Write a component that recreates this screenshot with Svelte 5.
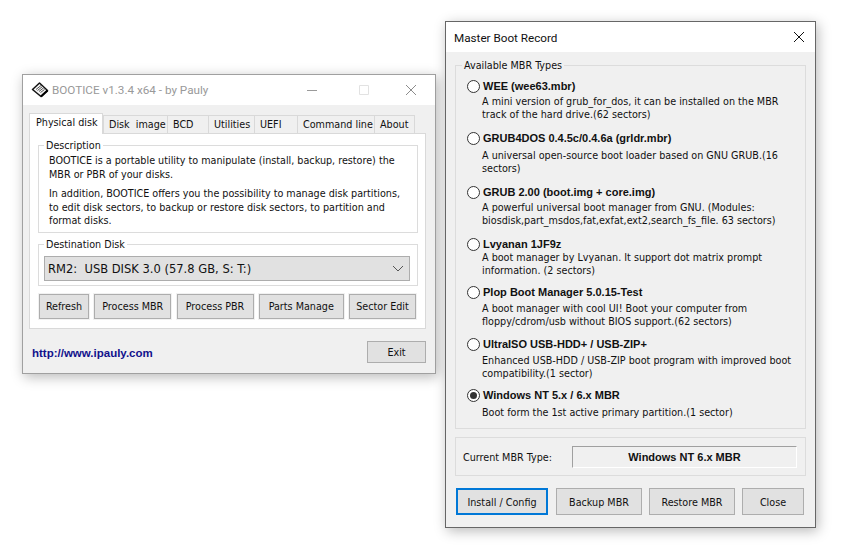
<script>
  const tabs = [
    { label: 'Physical disk', w: 74, active: true },
    { label: 'Disk  image', w: 65 },
    { label: 'BCD', w: 42 },
    { label: 'Utilities', w: 47 },
    { label: 'UEFI', w: 44 },
    { label: 'Command line', w: 78 },
    { label: 'About', w: 41 }
  ];
  const actions = [
    { label: 'Refresh', w: 50 },
    { label: 'Process MBR', w: 77 },
    { label: 'Process PBR', w: 77 },
    { label: 'Parts Manage', w: 85 },
    { label: 'Sector Edit', w: 67 }
  ];
  const types = [
    { t: 'WEE (wee63.mbr)', top: 7, gap: 1, lines: ['A mini version of grub_for_dos, it can be installed on the MBR', 'track of the hard drive.(62 sectors)'] },
    { t: 'GRUB4DOS 0.4.5c/0.4.6a (grldr.mbr)', top: 10, gap: 3, lines: ['A universal open-source boot loader based on GNU GRUB.(16', 'sectors)'] },
    { t: 'GRUB 2.00 (boot.img + core.img)', top: 10, gap: 1, lines: ['A powerful universal boot manager from GNU. (Modules:', 'biosdisk,part_msdos,fat,exfat,ext2,search_fs_file. 63 sectors)'] },
    { t: 'Lvyanan 1JF9z', top: 10, gap: -1, lines: ['A boot manager by Lvyanan. It support dot matrix prompt', 'information. (2 sectors)'] },
    { t: 'Plop Boot Manager 5.0.15-Test', top: 8, gap: 2, lines: ['A boot manager with cool UI! Boot your computer from', 'floppy/cdrom/usb without BIOS support.(62 sectors)'] },
    { t: 'UltraISO USB-HDD+ / USB-ZIP+', top: 9, gap: 2, lines: ['Enhanced USB-HDD / USB-ZIP boot program with improved boot', 'compatibility.(1 sector)'] },
    { t: 'Windows NT 5.x / 6.x MBR', top: 8, gap: 3, lines: ['Boot form the 1st active primary partition.(1 sector)'], checked: true }
  ];
</script>

<div class="desk">
  <section class="win main">
    <header class="bar">
      <svg class="logo" width="18" height="16" viewBox="0 0 18 16">
        <path d="M8.500 1 16.500 8.500 10 14.500 1.500 7.500Z" fill="#f4f4f4" stroke="#111" stroke-width="1.500" stroke-linejoin="round" />
        <path d="M5 7.500 10 3.500M6.500 8.500 11.500 4.500M8 9.500 13 5.500M9.500 10.500 13.500 7.500" stroke="#555" stroke-width="1" />
        <path d="M16.500 8.500 10 14.500" stroke="#000" stroke-width="2.200" />
      </svg>
      <span class="title">BOOTICE v1.3.4 x64 - by Pauly</span>
      <div class="caps">
        <svg width="140" height="14" viewBox="0 0 140 14">
          <path d="M12 7.500H22" stroke="#9a9a9a" />
          <path d="M64.500 2.500h9v9h-9z" fill="none" stroke="#e2e2e2" />
          <path d="M111 2 121 12M121 2 111 12" stroke="#8c8c8c" />
        </svg>
      </div>
    </header>
    <div class="body">
      <div class="tabs">
        {#each tabs as tab}
          <div class="tab" class:active={tab.active} style="width:{tab.w}px">{tab.label}</div>
        {/each}
      </div>
      <div class="panel">
        <fieldset class="group desc">
          <legend>Description</legend>
          <p>BOOTICE is a portable utility to manipulate (install, backup, restore) the<br />MBR or PBR of your disks.</p>
          <p>In addition, BOOTICE offers you the possibility to manage disk partitions,<br />to edit disk sectors, to backup or restore disk sectors, to partition and<br />format disks.</p>
        </fieldset>
        <fieldset class="group dest">
          <legend>Destination Disk</legend>
          <div class="combo">
            <span>RM2:  USB DISK 3.0 (57.8 GB, S: T:)</span>
            <svg width="12" height="7" viewBox="0 0 12 7"><path d="M1 1 6 6 11 1" fill="none" stroke="#555" /></svg>
          </div>
        </fieldset>
        <div class="actions">
          {#each actions as a}
            <button style="width:{a.w}px">{a.label}</button>
          {/each}
        </div>
      </div>
      <div class="foot">
        <span class="link">http://www.ipauly.com</span>
        <button class="exit">Exit</button>
      </div>
    </div>
  </section>

  <section class="win mbr">
    <header class="bar bar2">
      <span class="title2">Master Boot Record</span>
      <svg width="12" height="12" viewBox="0 0 12 12"><path d="M1 1 11 11M11 1 1 11" stroke="#111" /></svg>
    </header>
    <div class="body2">
      <fieldset class="group types">
        <legend>Available MBR Types</legend>
        {#each types as item}
          <div class="type" style="margin-top:{item.top}px">
            <div class="head" style="margin-bottom:{item.gap}px">
              <span class="radio" class:on={item.checked}></span>
              <b>{item.t}</b>
            </div>
            {#each item.lines as line}
              <div class="line">{line}</div>
            {/each}
          </div>
        {/each}
      </fieldset>
      <fieldset class="group current">
        <span class="cur-label">Current MBR Type:</span>
        <div class="field">Windows NT 6.x MBR</div>
      </fieldset>
      <div class="actions2">
        <button class="primary">Install / Config</button>
        <button class="b86">Backup MBR</button>
        <button class="b86">Restore MBR</button>
        <button class="b62">Close</button>
      </div>
    </div>
  </section>
</div>

<style>
  :global(body) {
    margin: 0;
    background: #fff;
  }
  .desk {
    position: relative;
    width: 856px;
    height: 553px;
    overflow: hidden;
    font: 10.700px/13px "DejaVu Sans Condensed", "DejaVu Sans", sans-serif;
    color: #111;
  }
  .win {
    position: absolute;
    box-sizing: border-box;
    background: #f0f0f0;
    border: 1px solid #8a8a8a;
    box-shadow: 2px 3px 12px rgba(0, 0, 0, 0.28);
    display: flex;
    flex-direction: column;
  }
  .main {
    left: 22px;
    top: 74px;
    width: 414px;
    height: 300px;
    border-color: #a0a0a0;
  }
  .mbr {
    left: 445px;
    top: 21px;
    width: 371px;
    height: 507px;
    border-color: #666;
  }
  .bar {
    height: 30px;
    background: #fff;
    display: flex;
    align-items: center;
    flex: none;
  }
  .logo {
    margin-left: 8px;
    margin-right: 3px;
    flex: none;
  }
  .title {
    color: #999;
    font: 11.700px/28px Roboto, sans-serif;
  }
  .caps {
    margin-left: auto;
    margin-right: 0;
    display: flex;
  }
  .body {
    flex: 1;
    padding: 8px 9px 0 6px;
  }
  .tabs {
    display: flex;
    padding-left: 1px;
    height: 20px;
    align-items: flex-end;
  }
  .tab {
    box-sizing: border-box;
    height: 18px;
    border: 1px solid #d9d9d9;
    border-bottom: 0;
    margin-right: -1px;
    padding-left: 5px;
    line-height: 17px;
    white-space: pre;
    background: #f0f0f0;
  }
  .tab.active {
    background: #fff;
    position: relative;
    z-index: 1;
    margin-bottom: -1px;
    height: 21px;
    margin-right: 0;
    margin-left: -1px;
    padding-left: 6px;
  }
  .panel {
    box-sizing: border-box;
    height: 196px;
    background: #fff;
    border: 1px solid #d9d9d9;
    padding: 5px 7px 0 8px;
  }
  .group {
    margin: 0;
    padding: 0;
    border: 1px solid #dcdcdc;
    box-sizing: border-box;
    min-width: 0;
  }
  legend {
    padding: 0 2px;
    margin-left: 5px;
    line-height: 13px;
    white-space: nowrap;
  }
  .desc legend,
  .types legend {
    margin-left: -5px;
  }
  .desc {
    height: 94px;
    padding: 2px 0 0 10px;
  }
  .desc p {
    margin: 0 0 6px;
    line-height: 13.500px;
    white-space: nowrap;
  }
  .dest {
    margin-top: 5px;
    height: 48px;
    padding: 5px 7px 0 5px;
  }
  .dest legend {
    margin-left: 0;
  }
  .combo {
    box-sizing: border-box;
    height: 25px;
    background: #e1e1e1;
    border: 1px solid #adadad;
    display: flex;
    align-items: center;
    justify-content: space-between;
    padding: 0 5px 0 3px;
    font-size: 12.800px;
    white-space: pre;
  }
  .actions {
    margin-top: 8px;
    display: flex;
    justify-content: space-between;
    padding: 0 2px 0 1px;
  }
  .actions button {
    box-shadow: 0 0 0 1px #f1f1f1;
  }
  button {
    box-sizing: border-box;
    margin: 0;
    padding: 0;
    height: 25px;
    background: #e1e1e1;
    border: 1px solid #adadad;
    font: inherit;
    color: #111;
  }
  .foot {
    display: flex;
    align-items: center;
    justify-content: space-between;
    padding: 12px 0 0 3px;
  }
  .link {
    font: bold 11.500px "Liberation Sans", sans-serif;
    color: #12128c;
    margin-top: 1px;
  }
  .exit {
    width: 59px;
    height: 22px;
  }
  .bar2 {
    height: 30px;
    justify-content: space-between;
    padding: 0 10px 0 8px;
  }
  .title2 {
    font: 11.700px Roboto, sans-serif;
    margin-top: 1px;
  }
  .body2 {
    flex: 1;
    padding: 7px 9px 0 9px;
  }
  .types {
    height: 370px;
    padding: 0 0 0 11px;
  }
  .head {
    display: flex;
    align-items: center;
    height: 15px;
    gap: 3px;
  }
  .head b {
    font: bold 11px "Liberation Sans", sans-serif;
    margin-top: -1px;
  }
  .radio {
    box-sizing: border-box;
    width: 13px;
    height: 13px;
    border: 1px solid #333;
    border-radius: 50%;
    background: #fff;
    display: flex;
    align-items: center;
    justify-content: center;
    flex: none;
  }
  .radio.on::after {
    content: "";
    width: 7px;
    height: 7px;
    border-radius: 50%;
    background: #333;
  }
  .line {
    padding-left: 15px;
    line-height: 13px;
    white-space: nowrap;
  }
  .current {
    margin-top: 8px;
    height: 39px;
    display: flex;
    flex-direction: row;
    align-items: center;
    padding: 0 8px 0 7px;
    justify-content: space-between;
  }
  .cur-label {
    margin-top: 2px;
  }
  .field {
    box-sizing: border-box;
    width: 225px;
    height: 22px;
    border: 1px solid;
    border-color: #a0a0a0 #fff #fff #a0a0a0;
    font: bold 11px/21px "Liberation Sans", sans-serif;
    text-align: center;
  }
  .actions2 {
    margin-top: 12px;
    display: flex;
    padding-left: 1px;
    gap: 7px;
  }
  .actions2 button {
    height: 27px;
    padding-top: 1px;
  }
  .primary {
    width: 92px;
    border: 2px solid #0078d7;
    margin-right: 1px;
  }
  .b86 {
    width: 86px;
  }
  .b62 {
    width: 62px;
  }
</style>
